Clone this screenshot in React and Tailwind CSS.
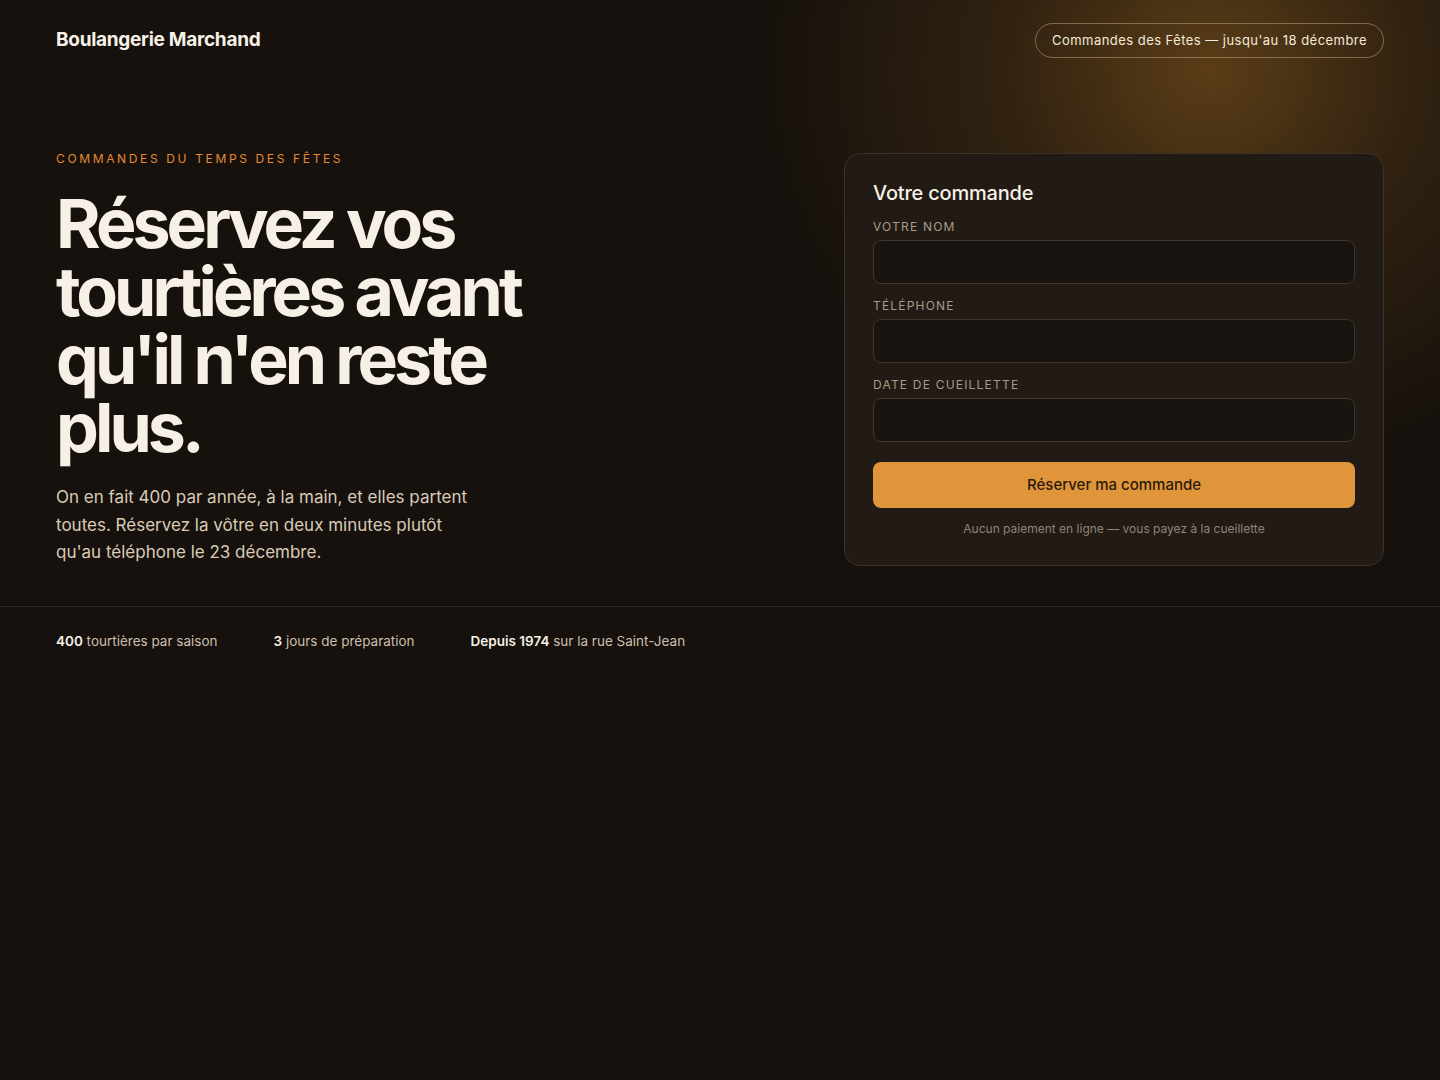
export default function App() {
    const fields = ["Votre nom", "Téléphone", "Date de cueillette"];

    return (
        <div className="relative min-h-[1080px] w-full overflow-hidden bg-[#16110c] font-['Inter',sans-serif] text-[#f5efe6]">
            <div className="pointer-events-none absolute left-[760px] top-[-340px] h-[820px] w-[900px] bg-[radial-gradient(closest-side,rgba(132,88,30,0.62),rgba(100,66,25,0.35)_45%,rgba(22,17,12,0)_100%)]"></div>

            <header className="relative z-10 flex h-[81px] items-center justify-between px-14">
                <span className="text-[19px] font-bold tracking-[-0.015em] text-[#f7f1e8]">Boulangerie Marchand</span>
                <span className="rounded-full border border-[#a08866]/70 px-4 py-[7px] text-[13px] font-normal tracking-[0.035em] text-[#f3ead9]">
                    Commandes des Fêtes — jusqu'au 18 décembre
                </span>
            </header>

            <section className="relative z-10 flex items-start justify-between px-14 pb-[39px] pt-[69px]">
                <div className="w-[560px]">
                    <p className="text-[12px] font-normal uppercase tracking-[0.22em] text-[#e48a35]">Commandes du temps des fêtes</p>
                    <h1 className="mt-[21px] text-[68px] font-bold leading-[68px] tracking-[-0.058em] text-[#f6f0e6]">
                        Réservez vos tourtières avant qu'il n'en reste plus.
                    </h1>
                    <p className="mt-[23px] w-[430px] text-[17px] leading-[27.5px] text-[#d9cbb8]">
                        On en fait 400 par année, à la main, et elles partent toutes. Réservez la vôtre en deux minutes plutôt qu'au téléphone le 23 décembre.
                    </p>
                </div>

                <div className="mt-[3px] w-[540px] rounded-2xl border border-[#3b3129] bg-[#211a15] px-7 pb-[27px] pt-[24px]">
                    <h2 className="text-[20px] font-medium tracking-[-0.01em] text-[#f6f0e6]">Votre commande</h2>
                    <div className="mt-[11px] flex flex-col gap-[14px]">
                        {fields.map((f) => (
                            <label key={f} className="flex flex-col gap-[5px]">
                                <span className="text-[12px] font-normal uppercase leading-[16px] tracking-[0.1em] text-[#a89a88]">{f}</span>
                                <input className="h-[44px] rounded-lg border border-[#3f352c] bg-[#19140f] px-3 text-[15px] text-[#f6f0e6] outline-none" />
                            </label>
                        ))}
                    </div>
                    <button className="mt-[20px] h-[46px] w-full rounded-lg bg-[#e0953b] text-[15px] font-medium text-[#2a1a0b]">
                        Réserver ma commande
                    </button>
                    <p className="mt-[12px] text-center text-[12px] text-[#8f8475]">Aucun paiement en ligne — vous payez à la cueillette</p>
                </div>
            </section>

            <div className="relative z-10 border-t border-[#2e2620]"></div>

            <div className="relative z-10 flex gap-14 px-14 pt-[24px] text-[13.5px] text-[#cdbfae]">
                <span><b className="font-semibold text-[#f6f0e6]">400</b> tourtières par saison</span>
                <span><b className="font-semibold text-[#f6f0e6]">3</b> jours de préparation</span>
                <span><b className="font-semibold text-[#f6f0e6]">Depuis 1974</b> sur la rue Saint-Jean</span>
            </div>
        </div>
    );
}
